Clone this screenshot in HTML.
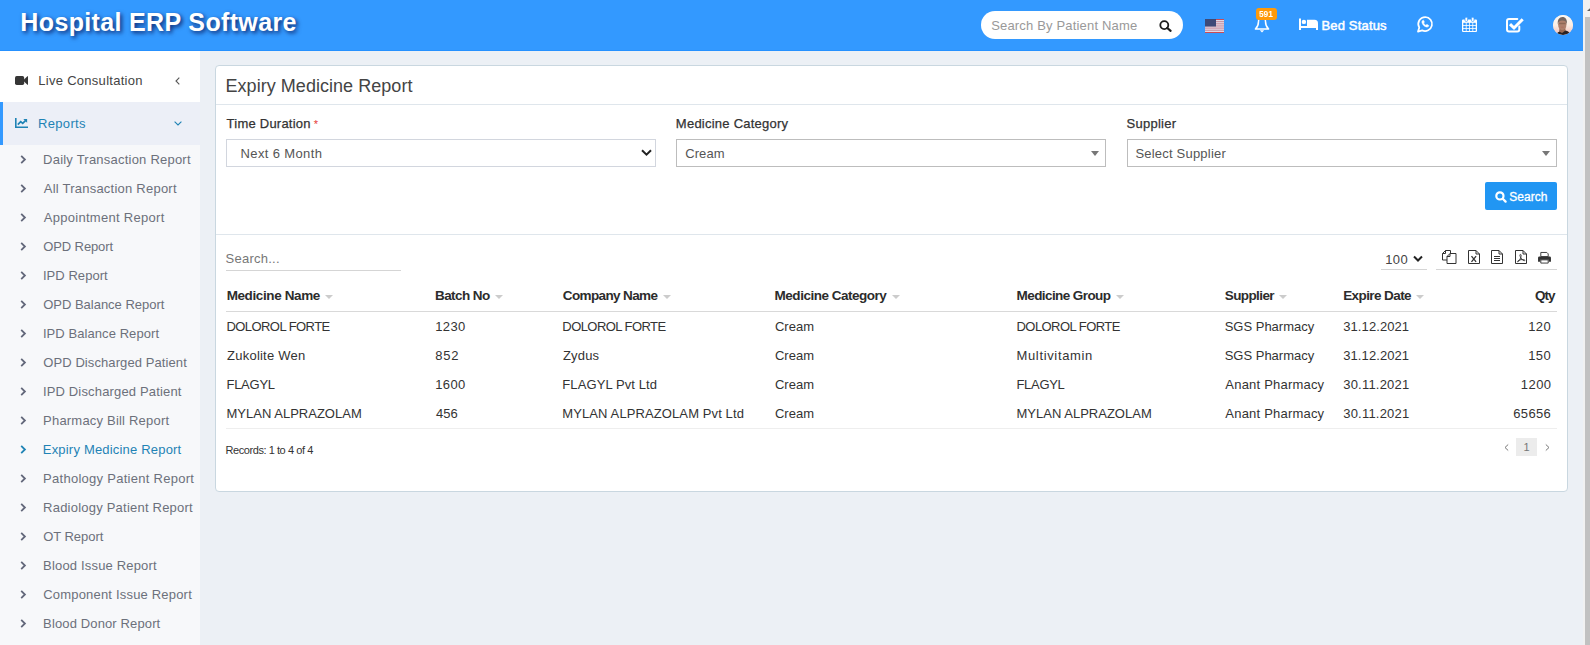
<!DOCTYPE html>
<html lang="en">
<head>
<meta charset="utf-8">
<title>Expiry Medicine Report</title>
<style>
*{box-sizing:border-box;margin:0;padding:0}
html,body{width:1590px;height:645px;overflow:hidden}
body{font-family:"Liberation Sans",sans-serif;font-size:14px;color:#444;background:#ecf0f5;position:relative}
.abs{position:absolute}
svg{position:absolute;overflow:visible}
span{white-space:nowrap}
/* header */
#hdr{position:absolute;left:0;top:0;width:1583px;height:51px;background:#3399ff;border-bottom:1px solid #2691ff}
#logo{position:absolute;left:20px;top:7px;font-weight:bold;font-size:25px;line-height:30px;color:#fff;white-space:nowrap;text-shadow:2px 2px 4px rgba(0,0,60,.75)}
#srch{position:absolute;left:981px;top:11px;width:202px;height:28px;border-radius:14px;background:#fff}
#srch .ph{position:absolute;left:11px;top:1px;line-height:28px;font-size:13px;color:#999;white-space:nowrap}
#bed{position:absolute;left:1321px;top:16px;line-height:20px;font-size:13px;color:#fff;font-weight:normal;-webkit-text-stroke:0.5px #fff;white-space:nowrap}
#badge{position:absolute;left:1256px;top:8px;width:21px;height:12px;border-radius:3px;background:#ff9a0a;color:#fff;font-size:9.5px;line-height:12px;text-align:center;font-weight:bold}
#badge span{display:inline-block;transform:scaleX(.88);position:relative;left:-0.3px;top:-0.4px}
#ava{position:absolute;left:1553px;top:15px;width:20px;height:20px;border-radius:50%;overflow:hidden;background:#f8e6dc}
/* scrollbar */
#sbar{position:absolute;left:1583px;top:0;width:7px;height:645px;background:#f1f1f1}
#sbar i{position:absolute;left:2px;top:17px;width:5px;height:628px;background:#c1c1c1}
/* sidebar */
#side{position:absolute;left:0;top:51px;width:200px;height:594px;background:#f7f8fa}
#side .m1{position:absolute;left:0;top:0;width:200px;height:51px;background:#fff}
#side .m2{position:absolute;left:0;top:51px;width:200px;height:43px;background:#eceff7;border-left:3px solid #3399ff}
#side .t{position:absolute;top:0;line-height:43px;font-size:13px;white-space:nowrap}
#side .m1 .t{left:38px;top:8px;color:#444}
#side .m2 .t{left:35px;color:#1f83b5}
.sub{position:absolute;left:43px;font-size:13px;line-height:20px;color:#6c707b;white-space:nowrap}
.sub.act{color:#1f83b5}
/* box */
#box{position:absolute;left:215px;top:65px;width:1353px;height:427px;background:#fff;border:1px solid #c9d7e0;border-radius:4px}
#box h3{position:absolute;left:10px;top:8px;font-size:18px;line-height:24px;font-weight:normal;color:#444;white-space:nowrap}
.hr{position:absolute;left:0;width:1351px;height:1px;background:#dfe6ec}
.lbl{position:absolute;top:48px;font-size:13px;line-height:20px;color:#333;white-space:nowrap;-webkit-text-stroke:0.25px #333}
.sel{position:absolute;top:73px;width:430px;height:28px;border:1px solid #d2d6de;background:#fff;font-size:13px;line-height:26px;color:#555;white-space:nowrap}
.sel .v{position:absolute;top:1px}
.sel.s2{border-color:#bdbdbd}
.tri{position:absolute;width:0;height:0;border-left:4px solid transparent;border-right:4px solid transparent;border-top:5px solid #777}
#btn{position:absolute;left:1269px;top:116px;width:72px;height:28px;background:#2196f3;border-radius:2px;color:#fff;font-size:12px;line-height:28px;white-space:nowrap;-webkit-text-stroke:0.3px #fff}
table{position:absolute;left:10px;top:215px;width:1331px;border-collapse:collapse;font-size:13px;color:#333;table-layout:fixed}
th{height:30px;font-size:13.5px;text-align:left;font-weight:bold;padding:0 1px;border-bottom:1px solid #d9d9d9;white-space:nowrap;color:#2c2c2c}
td{height:29px;padding:8px 1px 0;white-space:nowrap;vertical-align:top;line-height:15px}
th:last-child{text-align:right;padding-right:1px}
td:last-child{text-align:right;padding-right:6px}
tr.last td{border-bottom:1px solid #eee;height:30px}
th i{display:inline-block;width:0;height:0;border-left:4px solid transparent;border-right:4px solid transparent;border-top:4px solid #ccc;margin-left:5px;vertical-align:1px}
tr.first td{padding-top:7px}
</style>
</head>
<body>
<div id="hdr">
  <div id="logo"><span id="logo_t" style="letter-spacing:0.349px;position:relative;left:0.37px;">Hospital ERP Software</span></div>
  <div id="srch"><span class="ph"><span id="ph" style="letter-spacing:0.177px;position:relative;left:-0.89px;">Search By Patient Name</span></span>
    <svg style="left:178px;top:9px" width="13" height="12" viewBox="0 0 13 12"><circle cx="5.3" cy="5.1" r="4" fill="none" stroke="#1c1c1c" stroke-width="1.8"/><path d="M8.3 8L11.6 10.8" stroke="#1c1c1c" stroke-width="2.2" stroke-linecap="round"/></svg>
  </div>
  <svg style="left:1205px;top:19px" width="19" height="14" viewBox="0 0 19 14"><rect width="19" height="14" fill="#ded9e6"/><g fill="#c98a9a"><rect y="2.150" width="19" height="1"/><rect y="4.300" width="19" height="1"/><rect y="6.450" width="19" height="1"/><rect y="8.600" width="19" height="1"/><rect y="10.750" width="19" height="1"/></g><rect y="0" width="19" height="1" fill="#cc4b55"/><rect y="13" width="19" height="1" fill="#cc4b55"/><rect width="11" height="7.500" fill="#3d4a78"/></svg>
  <svg style="left:1254px;top:16px" width="16" height="17" viewBox="0 0 16 17"><path d="M8 1.200c-2.200 0-3.500 1.700-3.500 4.200 0 3.600-1.300 5.900-3.100 7.600h13.200c-1.800-1.700-3.100-4-3.100-7.600 0-2.500-1.300-4.200-3.500-4.200z" fill="none" stroke="#fff" stroke-width="1.500" stroke-linejoin="round"/><path d="M5.800 14.200h4.400l-2.200 2.400z" fill="#fff"/></svg>
  <div id="badge"><span id="badge_t">591</span></div>
  <svg style="left:1299px;top:18px" width="19" height="12" viewBox="0 0 19 12"><path d="M0 0.500h2v7.500h17v4h-2v-2h-15v2h-2z" fill="#fff"/><circle cx="4.900" cy="3.900" r="2.200" fill="#fff"/><path d="M8 1.800h7.500a3.500 3.500 0 0 1 3.500 3.500v3h-11z" fill="#fff"/></svg>
  <div id="bed"><span id="bed_t" style="letter-spacing:0.177px;position:relative;left:0.40px;">Bed Status</span></div>
  <svg style="left:1417px;top:16.400px" width="16" height="17" viewBox="0 0 16 17"><path d="M8.300 1a7 7 0 0 0-6 10.600l-1.300 4 4.200-1.200a7 7 0 1 0 3.100-13.400z" fill="none" stroke="#fff" stroke-width="1.750" stroke-linejoin="round"/><path stroke="#fff" stroke-width=".5" d="M5.700 4.400c-.6.500-1 1.300-.7 2.300.6 2 2.300 3.700 4.300 4.300 1 .300 1.800-.100 2.300-.700.300-.400.200-.800-.100-1l-1.300-.700c-.300-.200-.600-.100-.8.100l-.500.600c-1-.4-1.900-1.300-2.300-2.300l.6-.5c.2-.2.300-.5.100-.8l-.7-1.300c-.2-.300-.600-.400-.900 0z" fill="#fff"/></svg>
  <svg style="left:1462px;top:17px" width="15" height="16" viewBox="0 0 15 16"><path d="M1 2.600h13a1 1 0 0 1 1 1v10.400a1 1 0 0 1-1 1h-13a1 1 0 0 1-1-1v-10.400a1 1 0 0 1 1-1z" fill="#fff"/><g fill="#3399ff"><rect x="1.300" y="5.800" width="2.500" height="2.300"/><rect x="4.600" y="5.800" width="2.500" height="2.300"/><rect x="7.900" y="5.800" width="2.500" height="2.300"/><rect x="11.200" y="5.800" width="2.500" height="2.300"/><rect x="1.300" y="8.900" width="2.500" height="2.300"/><rect x="4.600" y="8.900" width="2.500" height="2.300"/><rect x="7.900" y="8.900" width="2.500" height="2.300"/><rect x="11.200" y="8.900" width="2.500" height="2.300"/><rect x="1.300" y="12" width="2.500" height="2"/><rect x="4.600" y="12" width="2.500" height="2"/><rect x="7.900" y="12" width="2.500" height="2"/><rect x="11.200" y="12" width="2.500" height="2"/></g><rect x="3" y="0.300" width="2.600" height="4.200" rx="1.200" fill="#fff" stroke="#3399ff" stroke-width=".7"/><rect x="9.400" y="0.300" width="2.600" height="4.200" rx="1.200" fill="#fff" stroke="#3399ff" stroke-width=".7"/></svg>
  <svg style="left:1506px;top:17px" width="18" height="16" viewBox="0 0 18 16"><path d="M13.300 9.500v3a2 2 0 0 1-2 2h-8.300a2 2 0 0 1-2-2v-8.500a2 2 0 0 1 2-2h8.300" fill="none" stroke="#fff" stroke-width="2" stroke-linecap="round"/><path d="M4 7.100l4 3.900l8.700-8.700" fill="none" stroke="#fff" stroke-width="3" stroke-linejoin="miter"/></svg>
  <div id="ava"><svg style="left:0;top:0" width="20" height="20" viewBox="0 0 20 20"><defs><filter id="bl" x="-20%" y="-20%" width="140%" height="140%"><feGaussianBlur stdDeviation="0.55"/></filter><linearGradient id="abg" x1="0" y1="0" x2="0" y2="1"><stop offset="0" stop-color="#fbf8f4"/><stop offset=".5" stop-color="#fbeee4"/><stop offset=".8" stop-color="#f7cfc6"/><stop offset="1" stop-color="#e9c3c4"/></linearGradient></defs><rect width="20" height="20" fill="url(#abg)"/><g filter="url(#bl)"><path d="M6.600 12h5.600l.6 6.500h-7z" fill="#9a6a52"/><path d="M3.500 20c.3-2.200 1.500-3 3-3.300l2.600 1.300 3.300-2.600c2.600.6 4.600 1.800 5.600 4.600z" fill="#2c2322"/><ellipse cx="9.300" cy="9.300" rx="4.200" ry="6" fill="#ae806c"/><path d="M4.900 9.500c-.8-4.800 1.500-7.600 4.500-7.600s5.300 2.600 4.300 7.400c-.4-2.500-1.200-3.900-4.300-3.900s-4.100 1.300-4.500 4.100z" fill="#74655e"/><rect x="6" y="7.800" width="6.600" height="1.400" fill="#86604f" opacity=".8"/><ellipse cx="9.300" cy="12.300" rx="1.700" ry=".7" fill="#b0685c" opacity=".5"/></g></svg></div>
</div>
<div id="sbar"><i></i><svg style="left:4px;top:8px" width="3" height="3" viewBox="0 0 3 3"><path d="M0 3L3 0.200L3 3z" fill="#606060"/></svg></div>
<div id="side">
  <div class="m1"><svg style="left:15px;top:25px" width="13" height="9" viewBox="0 0 13 9"><rect x="0" y="0" width="9.200" height="9" rx="1.700" fill="#363636"/><path d="M8 4.500L12.400 0.200h0.600v8.600h-0.600z" fill="#363636"/></svg><span class="t"><span id="live" style="letter-spacing:0.283px;position:relative;left:0.28px;">Live Consultation</span></span>
    <svg style="left:175px;top:26px" width="5" height="8" viewBox="0 0 5 8"><path d="M4.300 0.600L1 4l3.300 3.400" fill="none" stroke="#555" stroke-width="1.100"/></svg></div>
  <div class="m2"><svg style="left:12px;top:16px" width="13" height="10" viewBox="0 0 13 10"><path d="M0.800 0v9.200h12.200" fill="none" stroke="#1f83b5" stroke-width="1.600"/><path d="M2.800 6.600l2.900-3 2 1.800l3.300-3.300" fill="none" stroke="#1f83b5" stroke-width="1.700"/><path d="M8.300 0.900h3.800v3.800z" fill="#1f83b5"/></svg><span class="t"><span id="reports" style="letter-spacing:0.299px;position:relative;left:0.12px;">Reports</span></span>
    <svg style="left:171px;top:19px" width="8" height="5" viewBox="0 0 8 5"><path d="M0.600 0.700L4 4l3.400-3.300" fill="none" stroke="#1f83b5" stroke-width="1.100"/></svg></div>
  <svg style="left:20px;top:103.5px" width="7" height="9" viewBox="0 0 7 9"><path d="M1.200 0.900L4.900 4.500L1.200 8.100" fill="none" stroke="#62677a" stroke-width="1.800"/></svg>
  <div class="sub" style="top:99px"><span id="sub0" style="letter-spacing:0.221px;position:relative;left:0.10px;">Daily Transaction Report</span></div>
  <svg style="left:20px;top:132.5px" width="7" height="9" viewBox="0 0 7 9"><path d="M1.200 0.900L4.900 4.500L1.200 8.100" fill="none" stroke="#62677a" stroke-width="1.800"/></svg>
  <div class="sub" style="top:128px"><span id="sub1" style="letter-spacing:0.233px;position:relative;left:0.74px;">All Transaction Report</span></div>
  <svg style="left:20px;top:161.5px" width="7" height="9" viewBox="0 0 7 9"><path d="M1.200 0.900L4.900 4.500L1.200 8.100" fill="none" stroke="#62677a" stroke-width="1.800"/></svg>
  <div class="sub" style="top:157px"><span id="sub2" style="letter-spacing:0.288px;position:relative;left:0.74px;">Appointment Report</span></div>
  <svg style="left:20px;top:190.5px" width="7" height="9" viewBox="0 0 7 9"><path d="M1.200 0.900L4.900 4.500L1.200 8.100" fill="none" stroke="#62677a" stroke-width="1.800"/></svg>
  <div class="sub" style="top:186px"><span id="sub3" style="letter-spacing:-0.106px;position:relative;left:0.24px;">OPD Report</span></div>
  <svg style="left:20px;top:219.5px" width="7" height="9" viewBox="0 0 7 9"><path d="M1.200 0.900L4.900 4.500L1.200 8.100" fill="none" stroke="#62677a" stroke-width="1.800"/></svg>
  <div class="sub" style="top:215px"><span id="sub4" style="letter-spacing:0.059px;position:relative;left:-0.14px;">IPD Report</span></div>
  <svg style="left:20px;top:248.5px" width="7" height="9" viewBox="0 0 7 9"><path d="M1.200 0.900L4.900 4.500L1.200 8.100" fill="none" stroke="#62677a" stroke-width="1.800"/></svg>
  <div class="sub" style="top:244px"><span id="sub5" style="letter-spacing:-0.016px;position:relative;left:0.24px;">OPD Balance Report</span></div>
  <svg style="left:20px;top:277.5px" width="7" height="9" viewBox="0 0 7 9"><path d="M1.200 0.900L4.900 4.500L1.200 8.100" fill="none" stroke="#62677a" stroke-width="1.800"/></svg>
  <div class="sub" style="top:273px"><span id="sub6" style="letter-spacing:0.074px;position:relative;left:-0.14px;">IPD Balance Report</span></div>
  <svg style="left:20px;top:306.5px" width="7" height="9" viewBox="0 0 7 9"><path d="M1.200 0.900L4.900 4.500L1.200 8.100" fill="none" stroke="#62677a" stroke-width="1.800"/></svg>
  <div class="sub" style="top:302px"><span id="sub7" style="letter-spacing:0.091px;position:relative;left:0.24px;">OPD Discharged Patient</span></div>
  <svg style="left:20px;top:335.5px" width="7" height="9" viewBox="0 0 7 9"><path d="M1.200 0.900L4.900 4.500L1.200 8.100" fill="none" stroke="#62677a" stroke-width="1.800"/></svg>
  <div class="sub" style="top:331px"><span id="sub8" style="letter-spacing:0.165px;position:relative;left:-0.14px;">IPD Discharged Patient</span></div>
  <svg style="left:20px;top:364.5px" width="7" height="9" viewBox="0 0 7 9"><path d="M1.200 0.900L4.900 4.500L1.200 8.100" fill="none" stroke="#62677a" stroke-width="1.800"/></svg>
  <div class="sub" style="top:360px"><span id="sub9" style="letter-spacing:0.204px;position:relative;left:0.10px;">Pharmacy Bill Report</span></div>
  <svg style="left:20px;top:393.5px" width="7" height="9" viewBox="0 0 7 9"><path d="M1.200 0.900L4.900 4.500L1.200 8.100" fill="none" stroke="#1f83b5" stroke-width="1.800"/></svg>
  <div class="sub act" style="top:389px"><span id="sub10" style="letter-spacing:0.191px;position:relative;left:-0.20px;">Expiry Medicine Report</span></div>
  <svg style="left:20px;top:422.5px" width="7" height="9" viewBox="0 0 7 9"><path d="M1.200 0.900L4.900 4.500L1.200 8.100" fill="none" stroke="#62677a" stroke-width="1.800"/></svg>
  <div class="sub" style="top:418px"><span id="sub11" style="letter-spacing:0.270px;position:relative;left:0.10px;">Pathology Patient Report</span></div>
  <svg style="left:20px;top:451.5px" width="7" height="9" viewBox="0 0 7 9"><path d="M1.200 0.900L4.900 4.500L1.200 8.100" fill="none" stroke="#62677a" stroke-width="1.800"/></svg>
  <div class="sub" style="top:447px"><span id="sub12" style="letter-spacing:0.220px;position:relative;left:0.10px;">Radiology Patient Report</span></div>
  <svg style="left:20px;top:480.5px" width="7" height="9" viewBox="0 0 7 9"><path d="M1.200 0.900L4.900 4.500L1.200 8.100" fill="none" stroke="#62677a" stroke-width="1.800"/></svg>
  <div class="sub" style="top:476px"><span id="sub13" style="letter-spacing:-0.047px;position:relative;left:0.24px;">OT Report</span></div>
  <svg style="left:20px;top:509.5px" width="7" height="9" viewBox="0 0 7 9"><path d="M1.200 0.900L4.900 4.500L1.200 8.100" fill="none" stroke="#62677a" stroke-width="1.800"/></svg>
  <div class="sub" style="top:505px"><span id="sub14" style="letter-spacing:0.174px;position:relative;left:0.10px;">Blood Issue Report</span></div>
  <svg style="left:20px;top:538.5px" width="7" height="9" viewBox="0 0 7 9"><path d="M1.200 0.900L4.900 4.500L1.200 8.100" fill="none" stroke="#62677a" stroke-width="1.800"/></svg>
  <div class="sub" style="top:534px"><span id="sub15" style="letter-spacing:0.189px;position:relative;left:0.25px;">Component Issue Report</span></div>
  <svg style="left:20px;top:567.5px" width="7" height="9" viewBox="0 0 7 9"><path d="M1.200 0.900L4.900 4.500L1.200 8.100" fill="none" stroke="#62677a" stroke-width="1.800"/></svg>
  <div class="sub" style="top:563px"><span id="sub16" style="letter-spacing:0.132px;position:relative;left:0.10px;">Blood Donor Report</span></div>
</div>
<div id="box">
  <h3><span id="title" style="letter-spacing:0.039px;position:relative;left:-0.47px;">Expiry Medicine Report</span></h3>
  <div class="hr" style="top:38px"></div>
  <div class="lbl" style="left:10px"><span id="l1" style="letter-spacing:0.230px;position:relative;left:0.62px;">Time Duration</span> <span style="color:#e53935;font-size:11px;-webkit-text-stroke:0">*</span></div>
  <div class="lbl" style="left:460px"><span id="l2" style="letter-spacing:0.239px;position:relative;left:-0.15px;">Medicine Category</span></div>
  <div class="lbl" style="left:911px"><span id="l3" style="letter-spacing:0.263px;position:relative;left:-0.50px;">Supplier</span></div>
  <div class="sel" style="left:10px"><span class="v" style="left:14px"><span id="s1" style="letter-spacing:0.362px;position:relative;left:-0.40px;">Next 6 Month</span></span><svg style="left:414px;top:9px" width="11" height="8" viewBox="0 0 11 8"><path d="M1 1.200L5.500 5.700L10 1.200" fill="none" stroke="#222" stroke-width="2"/></svg></div>
  <div class="sel s2" style="left:460px"><span class="v" style="left:8px"><span id="s2" style="letter-spacing:0.070px;position:relative;left:0.22px;">Cream</span></span><i class="tri" style="left:414px;top:11px"></i></div>
  <div class="sel s2" style="left:911px"><span class="v" style="left:8px"><span id="s3" style="letter-spacing:0.204px;position:relative;left:-0.55px;">Select Supplier</span></span><i class="tri" style="left:414px;top:11px"></i></div>
  <div id="btn"><svg style="left:10px;top:9px" width="12" height="12" viewBox="0 0 12 12"><circle cx="4.900" cy="4.900" r="3.600" fill="none" stroke="#fff" stroke-width="2.200"/><path d="M7.800 7.800L10.600 10.600" stroke="#fff" stroke-width="2.300" stroke-linecap="round"/></svg><span style="position:absolute;left:24px;top:1px"><span id="btn_t" style="letter-spacing:-0.009px;position:relative;left:0.36px;">Search</span></span></div>
  <div class="hr" style="top:168px"></div>
  <div class="abs" style="left:10px;top:183px;font-size:13px;line-height:20px;color:#777"><span id="sq" style="letter-spacing:0.254px;position:relative;left:-0.48px;">Search...</span></div>
  <div class="abs" style="left:10px;top:204px;width:175px;height:1px;background:#d5d5d5"></div>
  <div class="abs" style="left:1170px;top:184px;font-size:13px;line-height:20px;color:#444"><span id="len" style="letter-spacing:0.343px;position:relative;left:-0.77px;">100</span></div>
  <svg style="left:1197px;top:189px" width="10" height="8" viewBox="0 0 10 8"><path d="M1 1.500L5 5.500L9 1.500" fill="none" stroke="#222" stroke-width="2"/></svg>
  <div class="abs" style="left:1165px;top:203px;width:46px;height:1px;background:#d5d5d5"></div>
  <div class="abs" style="left:1220px;top:203px;width:121px;height:1px;background:#d5d5d5"></div>
  <svg style="left:1226px;top:184px" width="15" height="14" viewBox="0 0 15 14"><path d="M5 10h-4.500v-6.500l3-3h5v3 M3.500 0.500v3h-3" fill="none" stroke="#333" stroke-width="1"/><path d="M8 3.500h6v10h-9v-7z M8 3.500v3h-3" fill="none" stroke="#333" stroke-width="1"/></svg>
  <svg style="left:1252px;top:184px" width="13" height="14" viewBox="0 0 13 14"><path d="M0.500 0.500h7.500l3.500 3.500v9.500h-11z M8 0.500v3.500h3.500" fill="none" stroke="#333" stroke-width="1"/><path d="M3.500 6.200l4.600 5.600 M8.100 6.200l-4.600 5.600" fill="none" stroke="#333" stroke-width="1.300"/></svg>
  <svg style="left:1275px;top:184px" width="13" height="14" viewBox="0 0 13 14"><path d="M0.500 0.500h7.500l3.500 3.500v9.500h-11z M8 0.500v3.500h3.500 M3 6.500h6 M3 8.500h6 M3 10.500h6" fill="none" stroke="#333" stroke-width="1"/></svg>
  <svg style="left:1299px;top:184px" width="13" height="14" viewBox="0 0 13 14"><path d="M0.500 0.500h7.500l3.500 3.500v9.500h-11z M8 0.500v3.500h3.500" fill="none" stroke="#333" stroke-width="1"/><path d="M5.600 4.500c1.100 0 .5 2.800-.8 5.200s-2.500 2.600-2.300 1.700 2.900-1.900 5.200-1.900 2.900 1.200 1.500 1.200-3.400-2.400-4-4.300-.3-1.900.4-1.900z" fill="none" stroke="#333" stroke-width=".9"/></svg>
  <svg style="left:1322px;top:186px" width="13" height="12" viewBox="0 0 14 13"><path d="M3 0.500h6.500l1.500 1.500v3h-8z" fill="#fff" stroke="#333" stroke-width="1"/><path d="M1.500 4.800h11a1.500 1.500 0 0 1 1.500 1.500v4.200h-2.500v-2h-9v2h-2.500v-4.200a1.500 1.500 0 0 1 1.500-1.500z" fill="#333"/><path d="M3 8.500h8v3.500h-8z" fill="#fff" stroke="#333" stroke-width="1"/></svg>
  <table>
    <tr><th style="width:208px"><span id="h0" style="letter-spacing:-0.385px;position:relative;left:-0.36px;">Medicine Name</span><i></i></th><th style="width:128px"><span id="h1" style="letter-spacing:-0.566px;position:relative;left:-0.05px;">Batch No</span><i></i></th><th style="width:212px"><span id="h2" style="letter-spacing:-0.621px;position:relative;left:-0.21px;">Company Name</span><i></i></th><th style="width:242px"><span id="h3" style="letter-spacing:-0.488px;position:relative;left:-0.41px;">Medicine Category</span><i></i></th><th style="width:208px"><span id="h4" style="letter-spacing:-0.584px;position:relative;left:-0.41px;">Medicine Group</span><i></i></th><th style="width:118px"><span id="h5" style="letter-spacing:-0.620px;position:relative;left:-0.15px;">Supplier</span><i></i></th><th style="width:120px"><span id="h6" style="letter-spacing:-0.589px;position:relative;left:0.16px;">Expire Date</span><i></i></th><th style="width:95px"><span id="h7" style="letter-spacing:-1.024px;position:relative;left:-1.52px;">Qty</span></th></tr>
    <tr class="first"><td><span id="c0_0" style="letter-spacing:-0.565px;position:relative;left:-0.55px;">DOLOROL FORTE</span></td><td><span id="c0_1" style="letter-spacing:0.398px;position:relative;left:0.24px;">1230</span></td><td><span id="c0_2" style="letter-spacing:-0.558px;position:relative;left:-0.71px;">DOLOROL FORTE</span></td><td><span id="c0_3" style="letter-spacing:0.014px;position:relative;left:-0.07px;">Cream</span></td><td><span id="c0_4" style="letter-spacing:-0.554px;position:relative;left:-0.52px;">DOLOROL FORTE</span></td><td><span id="c0_5" style="letter-spacing:-0.009px;position:relative;left:-0.31px;">SGS Pharmacy</span></td><td><span id="c0_6" style="letter-spacing:0.089px;position:relative;left:0.23px;">31.12.2021</span></td><td><span id="c0_7" style="letter-spacing:0.433px;position:relative;left:0.21px;">120</span></td></tr>
    <tr><td><span id="c1_0" style="letter-spacing:0.220px;position:relative;left:0.11px;">Zukolite Wen</span></td><td><span id="c1_1" style="letter-spacing:0.715px;position:relative;left:0.37px;">852</span></td><td><span id="c1_2" style="letter-spacing:0.180px;position:relative;left:-0.03px;">Zydus</span></td><td><span id="c1_3" style="letter-spacing:0.014px;position:relative;left:-0.07px;">Cream</span></td><td><span id="c1_4" style="letter-spacing:0.651px;position:relative;left:-0.52px;">Multivitamin</span></td><td><span id="c1_5" style="letter-spacing:-0.009px;position:relative;left:-0.31px;">SGS Pharmacy</span></td><td><span id="c1_6" style="letter-spacing:0.089px;position:relative;left:0.23px;">31.12.2021</span></td><td><span id="c1_7" style="letter-spacing:0.433px;position:relative;left:0.21px;">150</span></td></tr>
    <tr><td><span id="c2_0" style="letter-spacing:-0.250px;position:relative;left:-0.55px;">FLAGYL</span></td><td><span id="c2_1" style="letter-spacing:0.398px;position:relative;left:0.24px;">1600</span></td><td><span id="c2_2" style="letter-spacing:0.101px;position:relative;left:-0.71px;">FLAGYL Pvt Ltd</span></td><td><span id="c2_3" style="letter-spacing:0.014px;position:relative;left:-0.07px;">Cream</span></td><td><span id="c2_4" style="letter-spacing:-0.304px;position:relative;left:-0.52px;">FLAGYL</span></td><td><span id="c2_5" style="letter-spacing:0.208px;position:relative;left:0.32px;">Anant Pharmacy</span></td><td><span id="c2_6" style="letter-spacing:0.213px;position:relative;left:0.23px;">30.11.2021</span></td><td><span id="c2_7" style="letter-spacing:0.437px;position:relative;left:0.47px;">1200</span></td></tr>
    <tr class="last"><td><span id="c3_0" style="letter-spacing:0.012px;position:relative;left:-0.55px;">MYLAN ALPRAZOLAM</span></td><td><span id="c3_1" style="letter-spacing:0.108px;position:relative;left:0.92px;">456</span></td><td><span id="c3_2" style="letter-spacing:0.105px;position:relative;left:-0.71px;">MYLAN ALPRAZOLAM Pvt Ltd</span></td><td><span id="c3_3" style="letter-spacing:0.014px;position:relative;left:-0.07px;">Cream</span></td><td><span id="c3_4" style="letter-spacing:0.010px;position:relative;left:-0.52px;">MYLAN ALPRAZOLAM</span></td><td><span id="c3_5" style="letter-spacing:0.208px;position:relative;left:0.32px;">Anant Pharmacy</span></td><td><span id="c3_6" style="letter-spacing:0.213px;position:relative;left:0.23px;">30.11.2021</span></td><td><span id="c3_7" style="letter-spacing:0.355px;position:relative;left:0.22px;">65656</span></td></tr>
  </table>
  <div class="abs" style="left:10px;top:376px;font-size:11px;line-height:16px;color:#333;white-space:nowrap"><span id="rec" style="letter-spacing:-0.437px;position:relative;left:-0.45px;">Records: 1 to 4 of 4</span></div>
  <svg style="left:1288px;top:378px" width="5" height="7" viewBox="0 0 5 7"><path d="M4.200 0.500L1 3.500l3.200 3" fill="none" stroke="#777" stroke-width="1"/></svg>
  <div class="abs" style="left:1300px;top:372px;width:21px;height:18px;background:#ececec;font-size:11px;line-height:18px;color:#777;text-align:center">1</div>
  <svg style="left:1329px;top:378px" width="5" height="7" viewBox="0 0 5 7"><path d="M0.800 0.500L4 3.500l-3.200 3" fill="none" stroke="#777" stroke-width="1"/></svg>
</div>
</body>
</html>
